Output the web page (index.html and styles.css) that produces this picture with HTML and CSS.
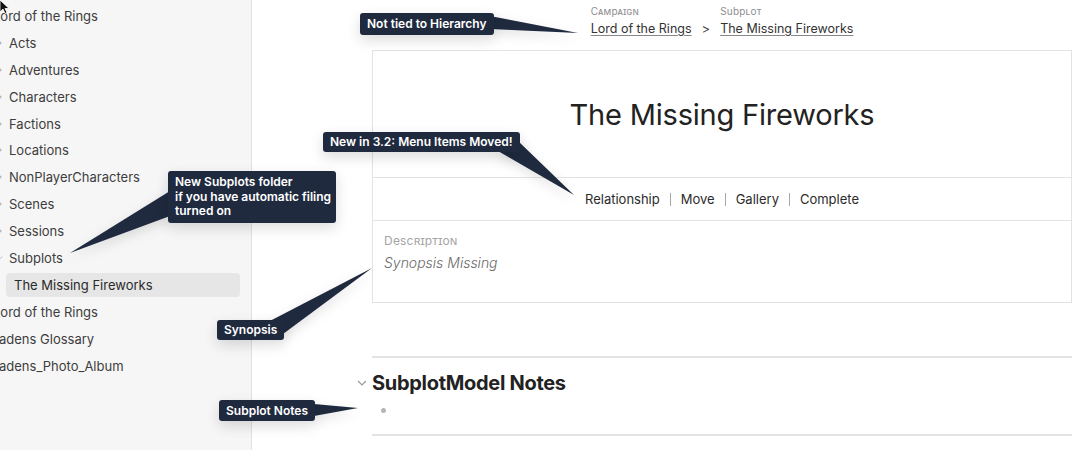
FILE: index.html
```html
<!DOCTYPE html>
<html lang="en">
<head>
<meta charset="utf-8">
<title>The Missing Fireworks</title>
<link rel="stylesheet" href="styles.css">
</head>
<body>
<div class="app">
  <aside class="sidebar">
    <div class="row root"><span class="cut7">Lord of the Rings</span></div>
    <div class="row child"><span class="caret"><svg viewBox="0 0 6 8" width="6" height="8"><path d="M1 1 L4 4 L1 7" fill="none" stroke="#b0b0b0" stroke-width="1.1"/></svg></span>Acts</div>
    <div class="row child"><span class="caret"><svg viewBox="0 0 6 8" width="6" height="8"><path d="M1 1 L4 4 L1 7" fill="none" stroke="#b0b0b0" stroke-width="1.1"/></svg></span>Adventures</div>
    <div class="row child"><span class="caret"><svg viewBox="0 0 6 8" width="6" height="8"><path d="M1 1 L4 4 L1 7" fill="none" stroke="#b0b0b0" stroke-width="1.1"/></svg></span>Characters</div>
    <div class="row child"><span class="caret"><svg viewBox="0 0 6 8" width="6" height="8"><path d="M1 1 L4 4 L1 7" fill="none" stroke="#b0b0b0" stroke-width="1.1"/></svg></span>Factions</div>
    <div class="row child"><span class="caret"><svg viewBox="0 0 6 8" width="6" height="8"><path d="M1 1 L4 4 L1 7" fill="none" stroke="#b0b0b0" stroke-width="1.1"/></svg></span>Locations</div>
    <div class="row child"><span class="caret"><svg viewBox="0 0 6 8" width="6" height="8"><path d="M1 1 L4 4 L1 7" fill="none" stroke="#b0b0b0" stroke-width="1.1"/></svg></span>NonPlayerCharacters</div>
    <div class="row child"><span class="caret"><svg viewBox="0 0 6 8" width="6" height="8"><path d="M1 1 L4 4 L1 7" fill="none" stroke="#b0b0b0" stroke-width="1.1"/></svg></span>Scenes</div>
    <div class="row child"><span class="caret"><svg viewBox="0 0 6 8" width="6" height="8"><path d="M1 1 L4 4 L1 7" fill="none" stroke="#b0b0b0" stroke-width="1.1"/></svg></span>Sessions</div>
    <div class="row child"><span class="caret"><svg viewBox="0 0 8 6" width="8" height="6"><path d="M1 1 L4 4 L7 1" fill="none" stroke="#b0b0b0" stroke-width="1.1"/></svg></span>Subplots</div>
    <div class="row"><span class="pill">The Missing Fireworks</span></div>
    <div class="row root"><span class="cut7">Lord of the Rings</span></div>
    <div class="row root"><span class="cut1">adens Glossary</span></div>
    <div class="row root"><span class="cut1">adens_Photo_Album</span></div>
  </aside>

  <main class="main">
    <nav class="crumbs">
      <div class="crumb">
        <span class="crumb-label">Campaign</span>
        <a class="crumb-link" href="#">Lord of the Rings</a>
      </div>
      <span class="crumb-sep">&gt;</span>
      <div class="crumb">
        <span class="crumb-label">Subplot</span>
        <a class="crumb-link" href="#">The Missing Fireworks</a>
      </div>
    </nav>

    <section class="card">
      <div class="card-title"><h1>The Missing Fireworks</h1></div>
      <div class="card-menu">
        <span>Relationship</span><span class="bar"></span>
        <span>Move</span><span class="bar"></span>
        <span>Gallery</span><span class="bar"></span>
        <span>Complete</span>
      </div>
      <div class="card-desc">
        <div class="desc-label">Description</div>
        <div class="desc-text">Synopsis Missing</div>
      </div>
    </section>

    <section class="notes">
      <div class="notes-head">
        <svg class="notes-caret" viewBox="0 0 10 6" width="10" height="6"><path d="M1 1 L5 5 L9 1" fill="none" stroke="#9a9a9a" stroke-width="1.2"/></svg>
        <h2>SubplotModel Notes</h2>
      </div>
      <div class="note-dot"></div>
    </section>
  </main>
</div>

<svg class="tails" viewBox="0 0 1078 450" width="1078" height="450">
  <polygon points="490,16 578,33 490,29" />
  <polygon points="498,151 517,140 574,195" />
  <polygon points="170,191 170,216 70,253" />
  <polygon points="268,322 283,334 372,268" />
  <polygon points="314,404 358,408 314,416" />
</svg>

<div class="callout c1">Not tied to Hierarchy</div>
<div class="callout c2">New in 3.2: Menu Items Moved!</div>
<div class="callout c3">New Subplots folder<br>if you have automatic filing<br>turned on</div>
<div class="callout c4">Synopsis</div>
<div class="callout c5">Subplot Notes</div>

<svg class="cursor" viewBox="0 0 10 14" width="10" height="14"><polygon points="0,0 0,12 3,9 5,13.5 7,12.5 5,8.5 9,8.5" fill="#111" stroke="#fff" stroke-width="0.8"/></svg>
</body>
</html>
```

FILE: styles.css
```css
* { box-sizing: border-box; }
html, body {
  margin: 0;
  padding: 0;
  width: 1078px;
  height: 450px;
  overflow: hidden;
  background: #ffffff;
}
body {
  position: relative;
  font-family: "Inter", "Noto Sans", sans-serif;
  color: #222;
}
.app {
  display: flex;
  height: 450px;
}

/* sidebar */
.sidebar {
  width: 252px;
  flex: none;
  background: #f6f6f6;
  border-right: 1px solid #e2e2e2;
  padding-top: 2.5px;
  overflow: hidden;
  font-size: 13px;
  color: #3d3d3d;
}
.row {
  height: 26.9px;
  display: flex;
  align-items: center;
  white-space: nowrap;
}
.cut7 { margin-left: -7px; }
.cut1 { margin-left: -1px; }
.caret {
  width: 6px;
  margin-left: -3px;
  margin-right: 6px;
  display: flex;
  align-items: center;
  justify-content: center;
}
.pill {
  margin-left: 6px;
  width: 234px;
  height: 24px;
  border-radius: 4px;
  background: #e6e6e6;
  display: flex;
  align-items: center;
  padding-left: 8px;
  color: #2a2a2a;
}

/* main */
.main {
  flex: 1;
  padding: 5px 6px 0 120px;
}
.crumbs {
  display: flex;
  justify-content: center;
  align-items: flex-end;
}
.crumb {
  display: flex;
  flex-direction: column;
  gap: 4px;
}
.crumb-label {
  font-size: 10px;
  line-height: 12px;
  font-variant: small-caps;
  text-transform: lowercase;
  color: #8e8e8e;
  letter-spacing: 0.2px;
}
.crumb-label::first-letter { text-transform: uppercase; }
.crumb-link {
  font-size: 12.5px;
  line-height: 16px;
  color: #333;
  text-decoration: underline;
  text-decoration-color: #888;
  text-underline-offset: 2px;
}
.crumb-sep {
  font-size: 13px;
  line-height: 16px;
  color: #444;
  margin: 0 10px;
}

.card {
  margin-top: 13px;
  border: 1px solid #e3e3e3;
}
.card-title {
  height: 126px;
  display: flex;
  align-items: center;
  justify-content: center;
}
.card-title h1 {
  margin: 0;
  font-weight: 400;
  font-size: 29px;
  color: #222;
  letter-spacing: -0.2px;
}
.card-menu {
  height: 43px;
  border-top: 1px solid #e3e3e3;
  display: flex;
  align-items: center;
  justify-content: center;
  font-size: 13px;
  color: #2b2b2b;
}
.card-menu .bar {
  width: 1px;
  height: 13px;
  background: #a8a8a8;
  margin: 0 10px;
}
.card-desc {
  height: 82px;
  border-top: 1px solid #e3e3e3;
  padding: 14px 11px 0;
}
.desc-label {
  font-size: 12px;
  line-height: 12px;
  font-variant: small-caps;
  text-transform: lowercase;
  color: #a5a5a5;
  letter-spacing: 0.2px;
}
.desc-label::first-letter { text-transform: uppercase; }
.desc-text {
  margin-top: 7px;
  font-size: 14px;
  line-height: 18px;
  font-style: italic;
  font-weight: 300;
  color: #6a6a6a;
}

.notes {
  margin-top: 53px;
  border-top: 2px solid #e4e4e4;
  border-bottom: 2px solid #e4e4e4;
  padding: 13px 0 21px;
}
.notes-head {
  display: flex;
  align-items: center;
  margin-left: -15px;
  gap: 5px;
}
.notes-head h2 {
  margin: 0;
  font-size: 20px;
  line-height: 24px;
  font-weight: 700;
  color: #222;
  letter-spacing: -0.3px;
}
.note-dot {
  margin: 13px 0 0 9px;
  width: 5px;
  height: 5px;
  border-radius: 50%;
  background: #b5b5b5;
}

/* annotations */
.tails {
  position: absolute;
  left: 0;
  top: 0;
  pointer-events: none;
  filter: drop-shadow(0 4px 6px rgba(0,0,0,0.12));
}
.tails polygon { fill: #1f2a3f; }
.callout {
  position: absolute;
  background: #1f2a3f;
  color: #fff;
  font-family: "Inter", "Noto Sans", sans-serif;
  font-weight: 600;
  font-size: 12px;
  border-radius: 3px;
  padding: 0 7px;
  white-space: nowrap;
  box-shadow: 0 5px 14px rgba(0,0,0,0.14);
}
.c1 { left: 360px; top: 13px; height: 22px; line-height: 22px; }
.c2 { left: 323px; top: 132px; height: 20px; line-height: 20px; }
.c3 { left: 168px; top: 171px; width: 168px; padding: 4px 7px; line-height: 14.5px; }
.c4 { left: 217px; top: 320px; height: 20px; line-height: 20px; }
.c5 { left: 219px; top: 400px; height: 21px; line-height: 21px; }
.cursor {
  position: absolute;
  left: 0;
  top: 0;
}
```
